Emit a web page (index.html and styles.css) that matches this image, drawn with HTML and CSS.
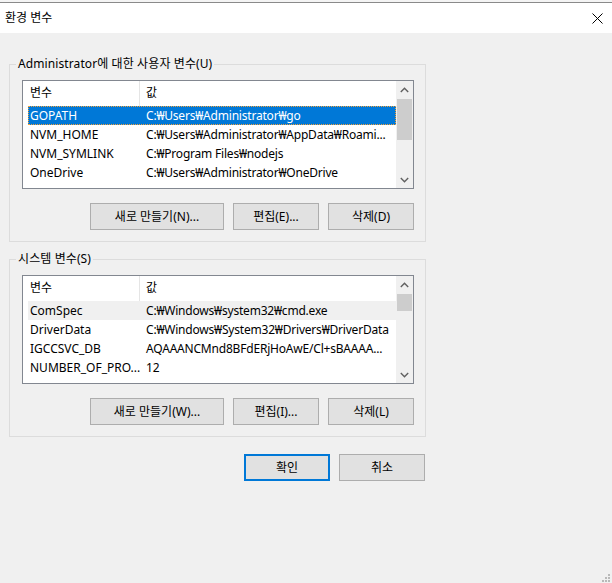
FILE: index.html
```html
<!DOCTYPE html>
<html lang="ko">
<head>
<meta charset="utf-8">
<title>환경 변수</title>
<link rel="stylesheet" href="styles.css">
</head>
<body>
<div class="edge"></div>
<div class="titlebar">
  <span class="title">환경 변수</span>
  <svg class="close" width="11" height="11" viewBox="0 0 11 11"><path d="M0.5 0.5 L10.5 10.5 M10.5 0.5 L0.5 10.5" stroke="#000" stroke-width="1" fill="none"/></svg>
</div>
<div class="content">
  <fieldset class="group">
    <legend>Administrator에 대한 사용자 변수(U)</legend>
    <div class="list">
      <div class="view">
        <div class="hdr"><div class="c1">변수</div><div class="c2">값</div></div>
        <div class="row sel"><div class="c1">GOPATH</div><div class="c2">C:₩Users₩Administrator₩go</div></div>
        <div class="row"><div class="c1">NVM_HOME</div><div class="c2">C:₩Users₩Administrator₩AppData₩Roami...</div></div>
        <div class="row"><div class="c1">NVM_SYMLINK</div><div class="c2">C:₩Program Files₩nodejs</div></div>
        <div class="row"><div class="c1">OneDrive</div><div class="c2">C:₩Users₩Administrator₩OneDrive</div></div>
      </div>
      <div class="sb">
        <div class="arrow"><svg width="9" height="6" viewBox="0 0 9 6"><path d="M0.8 5 L4.5 1.3 L8.2 5" stroke="#606060" stroke-width="1.4" fill="none"/></svg></div>
        <div class="thumb t1"></div>
        <div class="arrow down"><svg width="9" height="6" viewBox="0 0 9 6"><path d="M0.8 1 L4.5 4.7 L8.2 1" stroke="#606060" stroke-width="1.4" fill="none"/></svg></div>
      </div>
    </div>
    <div class="btns">
      <button class="btn wide">새로 만들기(N)...</button>
      <button class="btn">편집(E)...</button>
      <button class="btn">삭제(D)</button>
    </div>
  </fieldset>

  <fieldset class="group second">
    <legend>시스템 변수(S)</legend>
    <div class="list">
      <div class="view">
        <div class="hdr"><div class="c1">변수</div><div class="c2">값</div></div>
        <div class="row inactive"><div class="c1">ComSpec</div><div class="c2">C:₩Windows₩system32₩cmd.exe</div></div>
        <div class="row"><div class="c1">DriverData</div><div class="c2">C:₩Windows₩System32₩Drivers₩DriverData</div></div>
        <div class="row"><div class="c1">IGCCSVC_DB</div><div class="c2">AQAAANCMnd8BFdERjHoAwE/Cl+sBAAAA...</div></div>
        <div class="row"><div class="c1">NUMBER_OF_PRO...</div><div class="c2">12</div></div>
      </div>
      <div class="sb">
        <div class="arrow"><svg width="9" height="6" viewBox="0 0 9 6"><path d="M0.8 5 L4.5 1.3 L8.2 5" stroke="#606060" stroke-width="1.4" fill="none"/></svg></div>
        <div class="thumb t2"></div>
        <div class="arrow down"><svg width="9" height="6" viewBox="0 0 9 6"><path d="M0.8 1 L4.5 4.7 L8.2 1" stroke="#606060" stroke-width="1.4" fill="none"/></svg></div>
      </div>
    </div>
    <div class="btns">
      <button class="btn wide">새로 만들기(W)...</button>
      <button class="btn">편집(I)...</button>
      <button class="btn">삭제(L)</button>
    </div>
  </fieldset>

  <div class="dlg-btns">
    <button class="btn default">확인</button>
    <button class="btn">취소</button>
  </div>
</div>
<svg class="grip" width="10" height="10" viewBox="0 0 10 10">
  <rect x="7" y="1" width="2" height="2" fill="#b9b9b9"/>
  <rect x="4" y="4" width="2" height="2" fill="#b9b9b9"/>
  <rect x="7" y="4" width="2" height="2" fill="#b9b9b9"/>
  <rect x="1" y="7" width="2" height="2" fill="#b9b9b9"/>
  <rect x="4" y="7" width="2" height="2" fill="#b9b9b9"/>
  <rect x="7" y="7" width="2" height="2" fill="#b9b9b9"/>
</svg>
</body>
</html>
```
FILE: styles.css
```css
html, body {
  margin: 0;
  padding: 0;
}
body {
  background: #f0f0f0;
  font-family: "Noto Sans", "Noto Sans CJK KR", sans-serif;
  font-size: 12px;
  color: #000;
  width: 612px;
  height: 583px;
  overflow: hidden;
  position: relative;
}
.edge {
  height: 2px;
  background: #f4f4f4;
  border-bottom: 1px solid #8a8a8a;
}
.titlebar {
  height: 30px;
  background: #fff;
  display: flex;
  align-items: center;
  justify-content: space-between;
  padding: 0 9px 0 5px;
}
.title {
  font-size: 12px;
  line-height: 16px;
}
.close {
  display: block;
}
.content {
  width: 417px;
  padding: 23px 0 0 9px;
}
.group {
  margin: 0;
  width: 417px;
  box-sizing: border-box;
  min-width: 0;
  border: 1px solid #dcdcdc;
  padding: 8px 11px 11px 12px;
}
.group.second {
  margin-top: 9px;
}
.group legend {
  padding: 0 2px;
  margin-left: -6px;
  line-height: 16px;
  font-size: 12px;
  letter-spacing: 0.1px;
}
.list {
  display: flex;
  height: 109px;
  box-sizing: border-box;
  border: 1px solid #828790;
  background: #fff;
}
.view {
  flex: 1;
  min-width: 0;
  overflow: hidden;
  padding-left: 5px;
}
.hdr, .row {
  display: flex;
  white-space: nowrap;
}
.hdr {
  height: 25px;
  line-height: 24px;
}
.row {
  height: 19px;
  line-height: 19px;
}
.c1 {
  width: 112px;
  box-sizing: border-box;
  padding-left: 2px;
  overflow: hidden;
  flex: none;
}
.c2 {
  flex: 1;
  min-width: 0;
  padding-left: 6px;
  overflow: hidden;
  letter-spacing: -0.2px;
}
.hdr .c1 {
  border-right: 1px solid #e5e5e5;
}
.row.sel {
  background: #0078d7;
  color: #fff;
  outline: 1px dotted #f3a23a;
  outline-offset: -1px;
}
.row.inactive {
  background: #f0f0f0;
}
.sb {
  width: 17px;
  flex: none;
  background: #f0f0f0;
  display: flex;
  flex-direction: column;
}
.arrow {
  height: 17px;
  display: flex;
  align-items: center;
  justify-content: center;
}
.arrow.down {
  margin-top: auto;
}
.thumb {
  margin: 1px 1px 0;
  background: #cdcdcd;
}
.thumb.t1 { height: 41px; }
.thumb.t2 { height: 17px; }
.btns {
  display: flex;
  justify-content: flex-end;
  gap: 9px;
  margin-top: 14px;
}
.btn {
  height: 27px;
  width: 86px;
  box-sizing: border-box;
  border: 1px solid #adadad;
  background: #e1e1e1;
  font-family: "Noto Sans", "Noto Sans CJK KR", sans-serif;
  font-size: 12px;
  color: #000;
  padding: 0;
  line-height: 25px;
}
.btn.wide {
  width: 134px;
}
.btn.default {
  border: 2px solid #0078d7;
  line-height: 23px;
}
.dlg-btns {
  display: flex;
  justify-content: flex-end;
  gap: 9px;
  margin-top: 17px;
  padding-right: 1px;
}
.grip {
  position: absolute;
  right: 1px;
  bottom: 0;
}
```
